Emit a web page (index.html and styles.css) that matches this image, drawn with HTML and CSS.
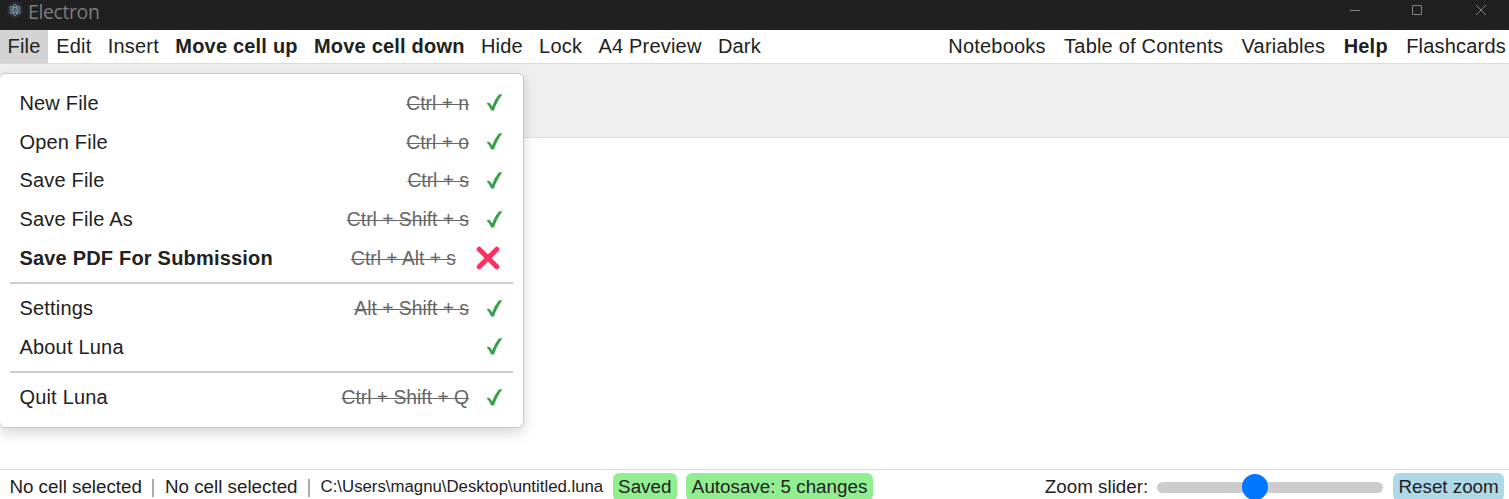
FILE: index.html
```html
<!DOCTYPE html>
<html lang="en">
<head>
<meta charset="utf-8">
<title>Electron</title>
<link rel="stylesheet" href="styles.css">
</head>
<body>
<svg class="defs" aria-hidden="true">
  <symbol id="check" viewBox="0 0 16 17"><path d="M0.2 9.6 Q1.5 8 3 9.1 Q4.5 10.5 5.6 12.6 Q8.5 5 12.3 0.6 L16 0.3 Q10.8 6.8 7.4 16.4 L4.7 16.4 Q3 12 0.2 9.6Z" fill="#36a047"/></symbol>
  <symbol id="cross" viewBox="0 0 24 24"><path d="M3.2 3.2L20.8 20.8M20.8 3.2L3.2 20.8" stroke="#ff2f5f" stroke-width="5" stroke-linecap="round"/></symbol>
</svg>
<header class="titlebar">
  <svg class="logo" viewBox="0 0 16 16"><circle cx="8" cy="8" r="8" fill="#2b2e3b"/><g fill="none" stroke="#8fb0b8" stroke-width=".8"><ellipse cx="8" cy="8" rx="5.6" ry="2.2" transform="rotate(30 8 8)"/><ellipse cx="8" cy="8" rx="5.6" ry="2.2" transform="rotate(90 8 8)"/><ellipse cx="8" cy="8" rx="5.6" ry="2.2" transform="rotate(150 8 8)"/></g><circle cx="8" cy="8" r=".8" fill="#a5c7cf"/></svg>
  <span class="app-name">Electron</span>
  <div class="window-controls">
    <svg viewBox="0 0 12 12"><path d="M1 6.5H11"/></svg>
    <svg viewBox="0 0 12 12"><rect x="1.5" y="1.5" width="9" height="9" rx=".5"/></svg>
    <svg viewBox="0 0 12 12"><path d="M1 1L11 11M11 1L1 11"/></svg>
  </div>
</header>
<nav class="menubar">
  <div class="group left">
    <span class="item active">File</span><span class="item">Edit</span><span class="item">Insert</span><span class="item strong">Move cell up</span><span class="item strong">Move cell down</span><span class="item">Hide</span><span class="item">Lock</span><span class="item">A4 Preview</span><span class="item">Dark</span>
  </div>
  <div class="group right">
    <span>Notebooks</span><span>Table of Contents</span><span>Variables</span><span class="strong">Help</span><span>Flashcards</span>
  </div>
</nav>
<main class="workspace">
  <div class="toolbar"></div>
  <div class="dropdown">
    <div class="row"><span>New File</span><s>Ctrl + n</s><svg class="check"><use href="#check"/></svg></div>
    <div class="row"><span>Open File</span><s>Ctrl + o</s><svg class="check"><use href="#check"/></svg></div>
    <div class="row"><span>Save File</span><s>Ctrl + s</s><svg class="check"><use href="#check"/></svg></div>
    <div class="row"><span>Save File As</span><s>Ctrl + Shift + s</s><svg class="check"><use href="#check"/></svg></div>
    <div class="row"><span class="strong">Save PDF For Submission</span><s>Ctrl + Alt + s</s><svg class="cross"><use href="#cross"/></svg></div>
    <div class="divider"></div>
    <div class="row"><span>Settings</span><s>Alt + Shift + s</s><svg class="check"><use href="#check"/></svg></div>
    <div class="row"><span>About Luna</span><svg class="check"><use href="#check"/></svg></div>
    <div class="divider"></div>
    <div class="row"><span>Quit Luna</span><s>Ctrl + Shift + Q</s><svg class="check"><use href="#check"/></svg></div>
  </div>
</main>
<footer class="statusbar">
  <span>No cell selected</span><i class="sep"></i><span>No cell selected</span><i class="sep"></i><span class="path">C:\Users\magnu\Desktop\untitled.luna</span><span class="badge">Saved</span><span class="badge">Autosave: 5 changes</span>
  <div class="zoom"><span>Zoom slider:</span><div class="track"><div class="thumb"></div></div><span class="badge reset">Reset zoom</span></div>
</footer>
</body>
</html>
```
FILE: styles.css
```css
* { box-sizing: border-box; }
body { margin: 0; height: 499px; overflow: hidden; display: flex; flex-direction: column; background: #fff; color: #212121; font: 20px/32px "Liberation Sans", Arial, sans-serif; white-space: nowrap; }
.defs { display: none; }
.strong { font-weight: bold; }
.titlebar { height: 30px; flex: none; display: flex; align-items: flex-start; background: #202020; color: #7d7d7d; }
.logo { width: 16px; height: 16px; margin: 2px 5px 0 7px; }
.app-name { font: 19.5px/24px "Open Sans", "Noto Sans", sans-serif; letter-spacing: -.4px; }
.window-controls { margin: 4px 22px 0 auto; display: flex; gap: 51px; }
.window-controls svg { width: 12px; height: 12px; fill: none; stroke: #858585; stroke-width: 1; }
.window-controls svg:nth-child(2) { margin: 0 1px 0 -1px; }
.menubar { height: 34px; flex: none; display: flex; justify-content: space-between; border-bottom: 1px solid #dcdcdc; letter-spacing: .2px; }
.group { display: flex; }
.item { padding: 0 8.1px 0 8.2px; height: 33px; }
.active { background: #d3d3d3; padding: 0 7.5px; }
.right { gap: 18.4px; padding-right: 3px; }
.workspace { flex: 1; position: relative; min-height: 0; }
.toolbar { height: 74px; background: #efefef; border-bottom: 1px solid #dcdcdc; }
.dropdown { position: absolute; left: -1px; top: 9px; width: 525px; height: 355px; padding: 9.6px 10px; background: #fff; border: 1px solid #c8c8c8; border-radius: 6px; box-shadow: 0 5px 14px rgba(0,0,0,.16); letter-spacing: .2px; }
.row { height: 38.7px; display: flex; align-items: center; padding: 0 10px 0 9.4px; }
.row s { margin: 2px 0 0 auto; color: #666; font-size: 19.3px; letter-spacing: 0; text-decoration-thickness: 1px; }
.check { width: 17px; height: 17px; margin: 0 0 0 17px; }
.row span + .check { margin-left: auto; }
.cross { width: 24px; height: 24px; margin: 0 3px 0 20px; }
.divider { height: 2px; margin: 5px 0 4.7px; background: #ccc; }
.statusbar { height: 30px; flex: none; display: flex; align-items: flex-start; border-top: 1px solid #dcdcdc; padding: 3px 5px 0 9.4px; font-size: 18.8px; line-height: 27px; }
.sep { width: 2px; height: 18px; margin: 6px 11px 0 10px; background: #aaa; }
.path { font-size: 16.8px; }
.badge { height: 28px; background: #90ee90; border-radius: 6px; padding: 0 5.6px; margin-left: 9.3px; }
.zoom { margin-left: auto; display: flex; }
.track { width: 226px; height: 11px; border-radius: 6px; background: #ccc; margin: 9px 1px 0 9px; }
.thumb { width: 26px; height: 26px; border-radius: 50%; background: #07f; margin: -8px 0 0 85px; }
.reset { background: #add8e6; padding: 0 5.3px; margin-left: 9px; }
```
